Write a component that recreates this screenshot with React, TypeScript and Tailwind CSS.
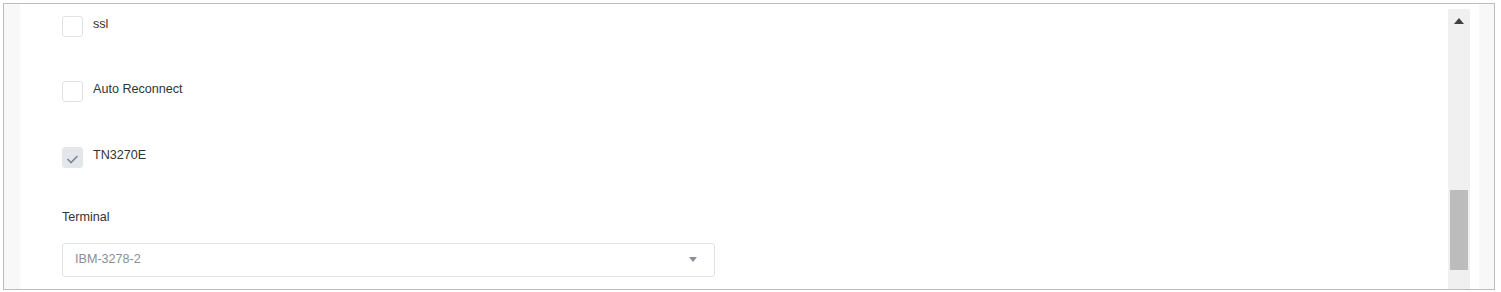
import React from "react";

function Check({ checked, label }: { checked?: boolean; label: string }) {
  return (
    <div className="flex items-start h-[20px]">
      <div
        className={
          "w-[21px] h-[21px] shrink-0 rounded-[3px] border flex items-center justify-center " +
          (checked ? "bg-[#e3e7eb] border-[#e3e7eb]" : "bg-white border-[#dfe3e6]")
        }
      >
        {checked && (
          <svg className="mt-[3px]" width="13" height="10" viewBox="0 0 13 10">
            <path d="M1.5 5 L5 8.5 L11.5 2" fill="none" stroke="#7b8691" strokeWidth="1.6" />
          </svg>
        )}
      </div>
      <span className="ml-[10px] text-[12.6px] text-[#333] leading-[17px]">{label}</span>
    </div>
  );
}

export default function App() {
  return (
    <div
      className="w-[1501px] h-[292px] bg-white"
      style={{ fontFamily: '"Liberation Sans", Arial, sans-serif' }}
    >
      <div className="ml-[3px] mt-[3px] w-[1492px] h-[287px] border border-[#bdbdbd] flex">
        <div className="w-[16px] bg-[#f8f8f8]" />
        <div className="flex-1 bg-white flex">
          <div className="flex-1 pl-[42px] pt-[12px]">
            <Check label="ssl" />
            <div className="h-[45px]" />
            <Check label="Auto Reconnect" />
            <div className="h-[46px]" />
            <Check checked label="TN3270E" />
            <div className="text-[12.6px] text-[#333] mt-[44px] leading-none">Terminal</div>
            <div className="mt-[19px] w-[653px] h-[34px] border border-[#e1e4e7] rounded-[3px] flex items-center justify-between pl-[12px] pr-[17px]">
              <span className="text-[12.6px] text-[#8a8f96] leading-none">IBM-3278-2</span>
              <svg width="8" height="5" viewBox="0 0 8 5">
                <path d="M0 0 L8 0 L4 5 Z" fill="#8a9097" />
              </svg>
            </div>
          </div>
          <div className="w-[22px] mr-[9px] mt-[5px] bg-[#f0f0f0] flex flex-col items-center">
            <svg className="mt-[9px]" width="10" height="6" viewBox="0 0 10 6">
              <path d="M0 6 L5 0 L10 6 Z" fill="#404040" />
            </svg>
            <div className="mt-[166px] w-[18px] h-[80px] bg-[#bcbcbc]" />
          </div>
        </div>
        <div className="w-[15px] bg-[#f8f8f8]" />
      </div>
    </div>
  );
}
